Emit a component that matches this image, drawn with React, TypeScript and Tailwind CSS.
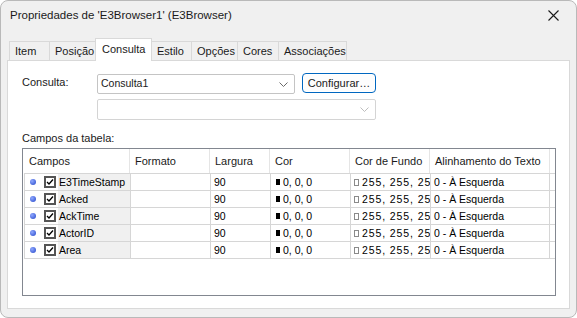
import React from 'react';

const ui = { fontFamily: '"Liberation Sans", Arial, sans-serif' };
const grid = { fontFamily: '"Liberation Sans", Arial, sans-serif' };

const tabs = [
  { label: 'Item', w: 'w-[41px]' },
  { label: 'Posição', w: 'w-[47px]' },
  { label: 'Consulta', w: 'w-[57px]', active: true },
  { label: 'Estilo', w: 'w-[41px]' },
  { label: 'Opções', w: 'w-[47px]' },
  { label: 'Cores', w: 'w-[42px]' },
  { label: 'Associações', w: 'w-[69px]' },
];

const headers = [
  { label: 'Campos', w: 'w-[107px]' },
  { label: 'Formato', w: 'w-[80px]' },
  { label: 'Largura', w: 'w-[60px]' },
  { label: 'Cor', w: 'w-[80px]' },
  { label: 'Cor de Fundo', w: 'w-[80px]' },
  { label: 'Alinhamento do Texto', w: 'w-[120px]' },
];

const fields = ['E3TimeStamp', 'Acked', 'AckTime', 'ActorID', 'Area'];

function Chevron({ color }: { color: string }) {
  return (
    <svg width="9" height="5" viewBox="0 0 9 5" fill="none">
      <path d="M0.5 0.5L4.5 4.5L8.5 0.5" stroke={color} strokeWidth="1" />
    </svg>
  );
}

function CheckBox() {
  return (
    <span className="flex h-[12px] w-[12px] items-center justify-center border-2 border-[#555555] bg-white">
      <svg width="8" height="8" viewBox="0 0 8 8" fill="none">
        <path d="M1 4L3 6L7 1.5" stroke="#000" strokeWidth="1.3" />
      </svg>
    </span>
  );
}

function FieldRow({ name }: { name: string }) {
  return (
    <div className="flex h-[17px] border-b border-[#d6d6d6] text-[10.5px] leading-[16px] text-black" style={grid}>
      <div className="flex w-[106px] items-center border-l border-[#d6d6d6]">
        <span className="ml-[5px] h-[6px] w-[6px] rounded-full bg-[radial-gradient(circle_at_35%_35%,#8fa8ff,#2446c8)]" />
        <span className="ml-[8px]">
          <CheckBox />
        </span>
        <span className="ml-[2px] h-full flex-1 bg-[#f0f0f0] pl-[1px]">{name}</span>
      </div>
      <div className="w-[80px] border-l border-[#d6d6d6]" />
      <div className="w-[60px] border-l border-[#d6d6d6] pl-[3px]">90</div>
      <div className="flex w-[80px] items-center border-l border-[#d6d6d6] pl-[5px]">
        <span className="mr-[3px] h-[6px] w-[4px] bg-black" />
        0, 0, 0
      </div>
      <div className="flex w-[80px] items-center overflow-hidden whitespace-nowrap border-l border-[#d6d6d6] pl-[3px]">
        <span className="mr-[3px] h-[7px] w-[5px] shrink-0 border border-[#8a8a8a]" />
        <span className="tracking-[0.9px]">255, 255, 255</span>
      </div>
      <div className="w-[120px] border-x border-[#d6d6d6] pl-[3px]">0 - À Esquerda</div>
    </div>
  );
}

export default function App() {
  return (
    <div className="flex h-[318px] w-[577px] flex-col overflow-hidden rounded-[8px] border border-[#b9b9b9] bg-[#f0f0f0] text-[#1a1a1a]" style={ui}>
      <div className="flex h-[29px] shrink-0 items-center justify-between pl-[9px] pr-[17px] text-[11.5px]">
        <span>Propriedades de 'E3Browser1' (E3Browser)</span>
        <svg width="11" height="11" viewBox="0 0 11 11" fill="none">
          <path d="M0.5 0.5L10.5 10.5M10.5 0.5L0.5 10.5" stroke="#1a1a1a" strokeWidth="1.1" />
        </svg>
      </div>

      <div className="flex flex-1 flex-col px-[6px] pb-[8px] pt-[8px]">
        <div className="relative z-10 flex h-[22px] items-end pl-[2px] text-[11px]">
          {tabs.map((t) =>
            t.active ? (
              <div key={t.label} className={`${t.w} -mb-px -ml-px h-[23px] border border-b-0 border-[#d9d9d9] bg-white pl-[6px] pt-[2px]`}>
                {t.label}
              </div>
            ) : (
              <div key={t.label} className={`${t.w} -ml-px h-[19px] border border-b-0 border-[#d9d9d9] bg-[#f0f0f0] pl-[5px] pt-[1px] leading-[17px] first:ml-0`}>
                {t.label}
              </div>
            )
          )}
        </div>

        <div className="flex flex-1 flex-col border border-[#d9d9d9] bg-white pl-[14px] pt-[12px] text-[11px]">
          <div className="flex h-[21px] items-start">
            <span className="w-[75px] leading-[18px]">Consulta:</span>
            <div className="mt-[1px] flex h-[20px] w-[198px] items-center justify-between rounded-[2px] border border-[#c4c4c4] bg-white pl-[3px] pr-[6px] text-[10.5px]" style={grid}>
              <span>Consulta1</span>
              <Chevron color="#6a6a6a" />
            </div>
            <button className="ml-[7px] flex h-[20px] w-[74px] items-center justify-center rounded-[4px] border border-[#0067c0] bg-[#fdfdfd] text-[11px] shadow-[inset_0_0_0_1px_#ffffff]">
              Configurar…
            </button>
          </div>

          <div className="ml-[75px] mt-[5px] flex h-[21px] w-[279px] items-center justify-end rounded-[2px] border border-[#d4d4d4] bg-white pr-[6px]">
            <Chevron color="#bdbdbd" />
          </div>

          <div className="mt-[10px] h-[16px] leading-[16px]">Campos da tabela:</div>

          <div className="mt-[2px] h-[148px] w-[534px] border border-[#828790] bg-white">
            <div className="flex h-[24px] items-center">
              {headers.map((h) => (
                <div key={h.label} className={`${h.w} h-full border-r border-[#e5e5e5] pl-[5px] leading-[24px] first:pl-[6px]`}>
                  {h.label}
                </div>
              ))}
            </div>
            <div className="ml-px border-t border-[#d6d6d6]">
              {fields.map((f) => (
                <FieldRow key={f} name={f} />
              ))}
            </div>
          </div>
        </div>
      </div>
    </div>
  );
}
